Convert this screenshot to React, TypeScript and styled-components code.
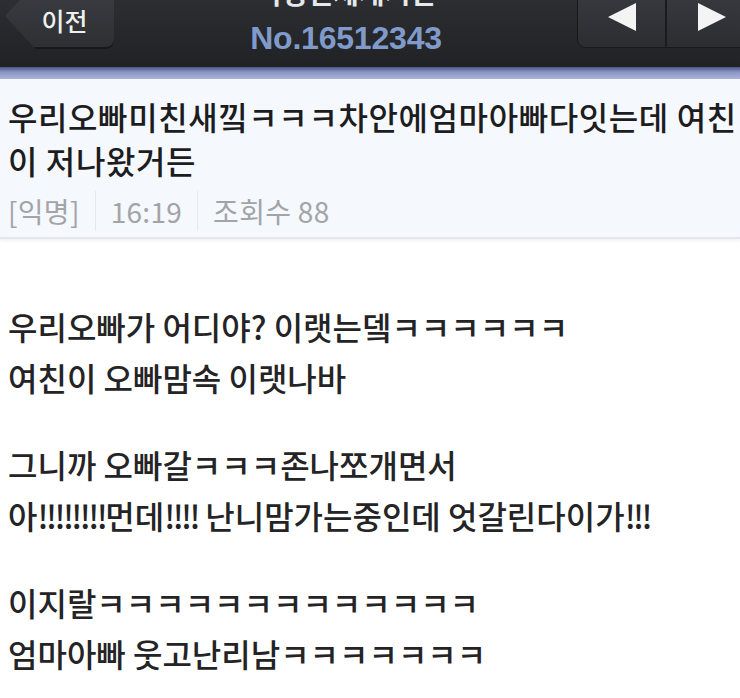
import { createGlobalStyle, styled } from "styled-components";

const GlobalStyle = createGlobalStyle`
  html, body {
    margin: 0;
    padding: 0;
    background: #ffffff;
    overflow: hidden;
  }
  body {
    font-family: "Noto Sans CJK KR", "Noto Sans", sans-serif;
  }
`;

const metaItems = ["[익명]", "16:19", "조회수 88"];

// "!" runs are narrower in the original phone font, so they get their own span
const renderLine = (line: string) =>
  line.split(/(!+)/).map((part, i) =>
    part.startsWith("!") ? <Bang key={i}>{part}</Bang> : part
  );

const bodyParagraphs = [
  ["우리오빠가 어디야? 이랫는뎈ㅋㅋㅋㅋㅋㅋ", "여친이 오빠맘속 이랫나바"],
  ["그니까 오빠갈ㅋㅋㅋ존나쪼개면서", "아!!!!!!!!먼데!!!! 난니맘가는중인데 엇갈린다이가!!!"],
  ["이지랄ㅋㅋㅋㅋㅋㅋㅋㅋㅋㅋㅋㅋㅋ", "엄마아빠 웃고난리남ㅋㅋㅋㅋㅋㅋㅋ"],
];

export default function App() {
  return (
    <>
      <GlobalStyle />
      <Page>
        <Header>
          <BackButton>이전</BackButton>
          <HeaderTitle>
            <BoardName>익명전체게시판</BoardName>
            <PostNo>No.16512343</PostNo>
          </HeaderTitle>
          <NavGroup>
            <NavButton $side="prev" aria-label="이전 글">
              <svg width="30" height="28" viewBox="0 0 30 28">
                <polygon points="1,14 29,0 29,28" fill="#f4f4f4" />
              </svg>
            </NavButton>
            <NavButton $side="next" aria-label="다음 글">
              <svg width="30" height="28" viewBox="0 0 30 28">
                <polygon points="29,14 1,0 1,28" fill="#f4f4f4" />
              </svg>
            </NavButton>
          </NavGroup>
        </Header>
        <BlueStrip />
        <TitleArea>
          <PostTitle>
            우리오빠미친새낔ㅋㅋㅋ차안에엄마아빠다잇는데 여친
            <br />이 저나왔거든
          </PostTitle>
          <MetaRow>
            {metaItems.map((item) => (
              <MetaItem key={item}>{item}</MetaItem>
            ))}
          </MetaRow>
        </TitleArea>
        <Body>
          {bodyParagraphs.map((lines) => (
            <Paragraph key={lines[0]}>
              {lines.map((line) => (
                <Line key={line}>{renderLine(line)}</Line>
              ))}
            </Paragraph>
          ))}
        </Body>
      </Page>
    </>
  );
}

const Page = styled.div`
  width: 740px;
  height: 720px;
  margin-top: -22px;
  background: #ffffff;
`;

const Header = styled.div`
  height: 89px;
  display: flex;
  align-items: flex-start;
  background: linear-gradient(#2f3236, #26282c 60%, #202225);
`;

const BackButton = styled.button`
  flex: none;
  margin: 5px 0 0 5px;
  width: 109px;
  height: 66px;
  border: none;
  padding: 8px 0 0 10px;
  background: linear-gradient(#3b3e43, #2d2f33);
  color: #eef1ee;
  font-family: "Noto Sans CJK KR", sans-serif;
  font-size: 25px;
  font-weight: 500;
  clip-path: polygon(28% 0, 100% 0, 100% 100%, 28% 100%, 0 50%);
  border-radius: 0 8px 8px 0;
  box-shadow: inset 0 -2px 0 #18191b;
`;

const HeaderTitle = styled.div`
  flex: 1;
  display: flex;
  flex-direction: column;
  align-items: center;
  margin-top: -2px;
`;

const BoardName = styled.div`
  font-size: 28px;
  line-height: 32px;
  color: #e6e8ea;
  font-weight: 700;
`;

const PostNo = styled.div`
  font-family: "Liberation Sans", Arial, sans-serif;
  font-size: 32px;
  line-height: 34px;
  margin-top: 13px;
  color: #809bca;
  font-weight: 700;
  letter-spacing: -0.2px;
`;

const NavGroup = styled.div`
  flex: none;
  margin-top: 10px;
  margin-right: -12px;
  display: flex;
  height: 59px;
  border-radius: 8px 0 0 8px;
  overflow: hidden;
  box-shadow: 0 0 0 1px #17181a;
`;

const NavButton = styled.button<{ $side: "prev" | "next" }>`
  width: 87px;
  height: 59px;
  border: none;
  padding: 15px 0 0 ${(p) => (p.$side === "prev" ? "0" : "4px")};
  display: flex;
  justify-content: center;
  align-items: flex-start;
  background: linear-gradient(#383b40, #2b2d31);
  & + & {
    border-left: 2px solid #1a1b1e;
  }
`;

const BlueStrip = styled.div`
  height: 12px;
  background: linear-gradient(#4c5684, #8d97c6 45%, #a9b3dc);
`;

const TitleArea = styled.div`
  background: #f5f8fc;
  padding: 15px 8px 10px;
  border-bottom: 2px solid #e3e6ea;
  box-shadow: 0 2px 3px rgba(0, 0, 0, 0.06);
`;

const PostTitle = styled.h1`
  margin: 0;
  font-size: 32px;
  line-height: 44px;
  font-weight: 500;
  color: #1d1d1f;
  white-space: nowrap;
  letter-spacing: 0.6px;
`;

const MetaRow = styled.div`
  display: flex;
  align-items: center;
  margin-top: 13px;
  height: 32px;
`;

const MetaItem = styled.span`
  font-size: 28px;
  color: #a2a4a8;
  padding: 0 15px;
  letter-spacing: 0.3px;
  &:first-child {
    padding-left: 0;
  }
  & + & {
    border-left: 1px solid #e6e8ec;
  }
`;

const Body = styled.div`
  padding: 62px 8px 0;
  display: flex;
  flex-direction: column;
  gap: 36px;
`;

const Paragraph = styled.div`
  display: flex;
  flex-direction: column;
`;

const Line = styled.div`
  font-size: 32px;
  line-height: 51px;
  font-weight: 500;
  color: #242426;
  white-space: nowrap;
`;

const Bang = styled.span`
  letter-spacing: -2.5px;
`;
